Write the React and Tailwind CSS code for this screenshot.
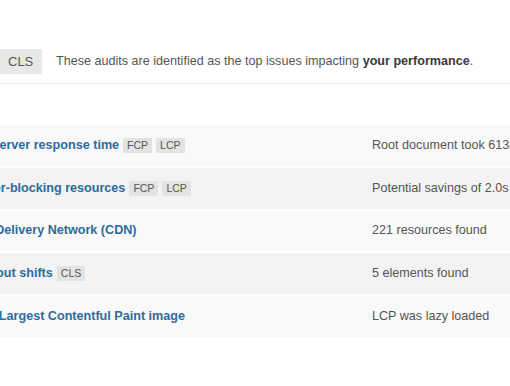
import React from "react";

const issues = [
  { title: "Reduce initial server response time", tags: ["FCP", "LCP"], note: "Root document took 613ms" },
  { title: "Eliminate render-blocking resources", tags: ["FCP", "LCP"], note: "Potential savings of 2.0s" },
  { title: "Use a Content Delivery Network (CDN)", tags: [], note: "221 resources found" },
  { title: "Avoid large layout shifts", tags: ["CLS"], note: "5 elements found" },
  { title: "Don't lazy load Largest Contentful Paint image", tags: [], note: "LCP was lazy loaded" },
];

const Tag = ({ label }) => (
  <span className="inline-flex items-center h-[15px] px-[4px] bg-[#e3e3e3] text-[10.5px] leading-none text-[#555] font-normal">
    {label}
  </span>
);

const App = () => {
  return (
    <div className="w-[510px] h-[386px] overflow-hidden bg-white font-['Liberation_Sans',Arial,sans-serif]">
      <div className="pt-[49px]">
        <div className="flex items-center">
          <div className="w-[42px] h-[25px] pl-[8px] flex items-center bg-[#e8e8e8] text-[13px] text-[#555]">
            CLS
          </div>
          <p className="ml-[14px] text-[12.6px] text-[#555] whitespace-nowrap">
            These audits are identified as the top issues impacting{" "}
            <span className="font-bold text-[#3a3a3a]">your performance</span>.
          </p>
        </div>
        <div className="mt-[9px] h-px bg-[#e6e6e6]" />
      </div>

      <div className="mt-[41px] flex flex-col gap-[2px]">
        {issues.map((issue, i) => (
          <div
            key={issue.title}
            className={`flex items-center h-[40.75px] ${i % 2 === 0 ? "bg-[#f9f9f9]" : "bg-[#f3f3f3]"}`}
          >
            <div className="ml-[-93px] w-[465px] shrink-0 flex items-center gap-[4px] whitespace-nowrap">
              <span className="text-[12.6px] font-bold text-[#2d6b9e]">{issue.title}</span>
              {issue.tags.map((t) => (
                <Tag key={t} label={t} />
              ))}
            </div>
            <div className="text-[12.6px] text-[#555] whitespace-nowrap">{issue.note}</div>
          </div>
        ))}
      </div>
    </div>
  );
};

export default App;
